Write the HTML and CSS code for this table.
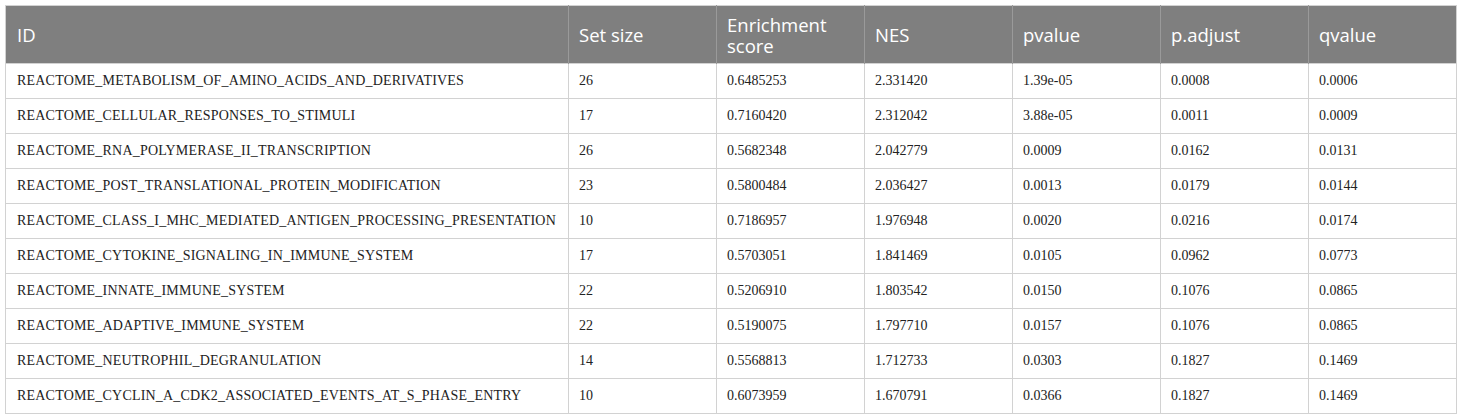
FILE: index.html
```html
<!DOCTYPE html>
<html>
<head>
<meta charset="utf-8">
<link rel="stylesheet" href="styles.css">
</head>
<body>
<table class="results">
  <colgroup>
    <col class="c-id">
    <col class="c-num">
    <col class="c-num">
    <col class="c-num">
    <col class="c-num">
    <col class="c-num">
    <col class="c-num">
  </colgroup>
  <thead>
    <tr>
      <th>ID</th>
      <th>Set size</th>
      <th>Enrichment<br>score</th>
      <th>NES</th>
      <th>pvalue</th>
      <th>p.adjust</th>
      <th>qvalue</th>
    </tr>
  </thead>
  <tbody>
    <tr><td>REACTOME_METABOLISM_OF_AMINO_ACIDS_AND_DERIVATIVES</td><td>26</td><td>0.6485253</td><td>2.331420</td><td>1.39e-05</td><td>0.0008</td><td>0.0006</td></tr>
    <tr><td>REACTOME_CELLULAR_RESPONSES_TO_STIMULI</td><td>17</td><td>0.7160420</td><td>2.312042</td><td>3.88e-05</td><td>0.0011</td><td>0.0009</td></tr>
    <tr><td>REACTOME_RNA_POLYMERASE_II_TRANSCRIPTION</td><td>26</td><td>0.5682348</td><td>2.042779</td><td>0.0009</td><td>0.0162</td><td>0.0131</td></tr>
    <tr><td>REACTOME_POST_TRANSLATIONAL_PROTEIN_MODIFICATION</td><td>23</td><td>0.5800484</td><td>2.036427</td><td>0.0013</td><td>0.0179</td><td>0.0144</td></tr>
    <tr><td>REACTOME_CLASS_I_MHC_MEDIATED_ANTIGEN_PROCESSING_PRESENTATION</td><td>10</td><td>0.7186957</td><td>1.976948</td><td>0.0020</td><td>0.0216</td><td>0.0174</td></tr>
    <tr><td>REACTOME_CYTOKINE_SIGNALING_IN_IMMUNE_SYSTEM</td><td>17</td><td>0.5703051</td><td>1.841469</td><td>0.0105</td><td>0.0962</td><td>0.0773</td></tr>
    <tr><td>REACTOME_INNATE_IMMUNE_SYSTEM</td><td>22</td><td>0.5206910</td><td>1.803542</td><td>0.0150</td><td>0.1076</td><td>0.0865</td></tr>
    <tr><td>REACTOME_ADAPTIVE_IMMUNE_SYSTEM</td><td>22</td><td>0.5190075</td><td>1.797710</td><td>0.0157</td><td>0.1076</td><td>0.0865</td></tr>
    <tr><td>REACTOME_NEUTROPHIL_DEGRANULATION</td><td>14</td><td>0.5568813</td><td>1.712733</td><td>0.0303</td><td>0.1827</td><td>0.1469</td></tr>
    <tr><td>REACTOME_CYCLIN_A_CDK2_ASSOCIATED_EVENTS_AT_S_PHASE_ENTRY</td><td>10</td><td>0.6073959</td><td>1.670791</td><td>0.0366</td><td>0.1827</td><td>0.1469</td></tr>
  </tbody>
</table>
</body>
</html>
```
FILE: styles.css
```css
html, body {
  margin: 0;
  padding: 0;
  background: #ffffff;
}
body {
  padding: 5px 0 0 5px;
}
.results {
  border-collapse: collapse;
  table-layout: fixed;
  width: 1449px;
  border: 1px solid #d2d2d2;
}
.c-id { width: 563px; }
.c-num { width: 148px; }
.results th {
  background: #7f7f7f;
  color: #ffffff;
  font-family: "Open Sans", "Noto Sans", sans-serif;
  font-weight: 400;
  font-size: 18.5px;
  line-height: 21px;
  text-align: left;
  vertical-align: middle;
  height: 58px;
  padding: 0 10px;
  box-sizing: border-box;
  border-left: 1px solid #9a9a9a;
}
.results th:first-child {
  padding-left: 11px;
  border-left: none;
}
.results td {
  font-family: "Liberation Serif", "Times New Roman", serif;
  font-size: 14px;
  color: #222222;
  height: 35px;
  padding: 0 10px;
  box-sizing: border-box;
  vertical-align: middle;
  border: 1px solid #d2d2d2;
  white-space: nowrap;
}
.results td:first-child {
  padding-left: 11px;
  letter-spacing: 0.2px;
}
```
